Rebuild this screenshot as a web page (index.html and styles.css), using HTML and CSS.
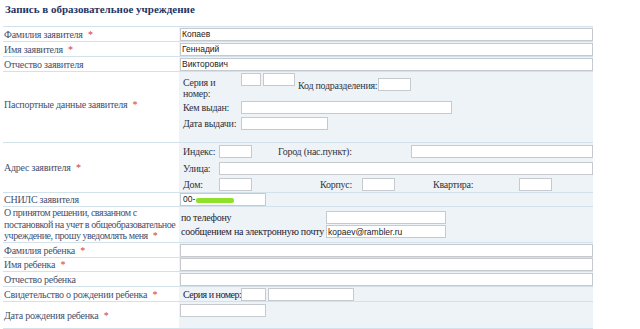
FILE: index.html
```html
<!DOCTYPE html>
<html lang="ru">
<head>
<meta charset="utf-8">
<title>Запись в образовательное учреждение</title>
<link rel="stylesheet" href="styles.css">
</head>
<body>
<div class="page">
  <h1 class="title">Запись в образовательное учреждение</h1>
  <table class="form">
    <tr class="h15">
      <td class="lab">Фамилия заявителя <span class="req">*</span></td>
      <td class="val"><input class="in full" value="Копаев"></td>
    </tr>
    <tr class="h15">
      <td class="lab">Имя заявителя <span class="req">*</span></td>
      <td class="val"><input class="in full" value="Геннадий"></td>
    </tr>
    <tr class="h15">
      <td class="lab">Отчество заявителя</td>
      <td class="val"><input class="in full" value="Викторович"></td>
    </tr>
    <tr class="h71">
      <td class="lab raise">Паспортные данные заявителя <span class="req">*</span></td>
      <td class="val top">
        <div class="pass">
          <div class="prow p1">
            <span class="plabel two">Серия и<br>номер:</span>
            <input class="in w20">
            <input class="in w32 gap2">
            <span class="kod">Код подразделения:</span>
            <input class="in w33 kin">
          </div>
          <div class="prow p2">
            <span class="plabel">Кем выдан:</span>
            <input class="in w211">
          </div>
          <div class="prow p3">
            <span class="plabel">Дата выдачи:</span>
            <input class="in w87">
          </div>
        </div>
      </td>
    </tr>
    <tr class="h50">
      <td class="lab">Адрес заявителя <span class="req">*</span></td>
      <td class="val top">
        <div class="addr">
          <div class="arow a1">
            <span class="alabel">Индекс:</span>
            <input class="in w33">
            <span class="city">Город (нас.пункт):</span>
            <input class="in wcity">
          </div>
          <div class="arow a2">
            <span class="alabel">Улица:</span>
            <input class="in wstreet">
          </div>
          <div class="arow a3">
            <span class="alabel">Дом:</span>
            <input class="in w33">
            <span class="korp">Корпус:</span>
            <input class="in w33">
            <span class="kv">Квартира:</span>
            <input class="in w33">
          </div>
        </div>
      </td>
    </tr>
    <tr class="h14">
      <td class="lab">СНИЛС заявителя</td>
      <td class="val"><div class="in w86 fake">00-<span class="mask"></span></div></td>
    </tr>
    <tr class="h36">
      <td class="lab multi">О принятом решении, связанном с<br>постановкой на учет в общеобразовательное<br>учреждение, прошу уведомлять меня <span class="req">*</span></td>
      <td class="val">
        <div class="notif">
          <div class="nrow n1"><span class="nlabel">по телефону</span><input class="in w120"></div>
          <div class="nrow n2"><span class="nlabel">сообщением на электронную почту</span><input class="in w120" value="kopaev@rambler.ru"></div>
        </div>
      </td>
    </tr>
    <tr class="h15">
      <td class="lab">Фамилия ребенка <span class="req">*</span></td>
      <td class="val"><input class="in full"></td>
    </tr>
    <tr class="h14">
      <td class="lab">Имя ребенка <span class="req">*</span></td>
      <td class="val"><input class="in full"></td>
    </tr>
    <tr class="h15">
      <td class="lab">Отчество ребенка</td>
      <td class="val"><input class="in full"></td>
    </tr>
    <tr class="h15">
      <td class="lab">Свидетельство о рождении ребенка <span class="req">*</span></td>
      <td class="val">
        <div class="cert">
          <span class="clabel">Серия и номер:</span>
          <input class="in w25">
          <input class="in w86 gap2">
        </div>
      </td>
    </tr>
    <tr class="h27">
      <td class="lab">Дата рождения ребенка <span class="req">*</span></td>
      <td class="val top"><input class="in w86 dob"></td>
    </tr>
  </table>
</div>
</body>
</html>
```

FILE: styles.css
```css
html, body {
  margin: 0;
  padding: 0;
  background: #ffffff;
  font-family: "Liberation Serif", "Times New Roman", serif;
}

.page {
  padding: 3px 0 0 3px;
}

.title {
  margin: 0 0 0 2px;
  height: 23px;
  font-size: 11px;
  line-height: 12px;
  letter-spacing: 0;
  font-weight: bold;
  color: #1f3563;
}

.form {
  border-collapse: collapse;
  width: 590px;
  table-layout: fixed;
}

.form td {
  padding: 0;
  border-bottom: 1px solid #d2e1ea;
  vertical-align: middle;
  overflow: hidden;
}

.form tr:first-child td {
  border-top: 1px solid #d2e1ea;
}

.lab {
  width: 175px;
  padding-left: 1px !important;
  background: #ffffff;
  color: #45506d;
  font-size: 10px;
  letter-spacing: -0.25px;
  line-height: 11px;
  white-space: nowrap;
}

.h71 td.lab.raise {
  height: 64px;
  padding-bottom: 6px;
}

.lab.multi {
  line-height: 11.5px;
  letter-spacing: -0.45px;
}

.req {
  color: #d23c3c;
  margin-left: 3px;
}

.val {
  background: #eef3f7;
  padding-left: 1px !important;
  font-size: 10px;
  letter-spacing: -0.25px;
  color: #2b2f38;
  line-height: 11px;
  white-space: nowrap;
}

.val.top {
  vertical-align: top !important;
}

.h14 td { height: 13px; }
.h15 td { height: 14px; }
.h71 td { height: 70px; }
.h50 td { height: 49px; }
.h36 td { height: 35px; }
.h27 td { height: 26px; }

.in {
  box-sizing: border-box;
  display: block;
  height: 13px;
  margin: 0;
  padding: 0 1px;
  border: 1px solid #c6cacf;
  background: #ffffff;
  font-family: "Liberation Sans", Arial, sans-serif;
  font-size: 8.5px;
  letter-spacing: 0;
  line-height: 11px;
  color: #222222;
  outline: none;
}

.full { width: 413px; }
.w20 { width: 20px; }
.w25 { width: 25px; }
.w32 { width: 32px; }
.w33 { width: 33px; }
.w86 { width: 86px; }
.w87 { width: 87px; }
.w120 { width: 120px; }
.w211 { width: 211px; }
.wcity { width: 183px; }
.wstreet { width: 374px; }
.gap2 { margin-left: 2px; }

/* passport block */
.pass {
  display: flex;
  flex-direction: column;
  padding-left: 3px;
  padding-top: 1px;
}

.prow {
  display: flex;
  align-items: center;
}

.p1 {
  align-items: flex-start;
  height: 27px;
}

.plabel {
  width: 58px;
  flex: none;
  color: #2e3340;
}

.plabel.two {
  padding-top: 4px;
}

.kod {
  margin-left: 3px;
  margin-top: 7px;
  color: #2e3340;
}

.kin {
  margin-left: 1px;
  margin-top: 5px;
}

.p2 {
  height: 13px;
  margin-top: 1px;
}

.p3 {
  height: 13px;
  margin-top: 3px;
}

/* address block */
.addr {
  display: flex;
  flex-direction: column;
  padding-left: 3px;
  padding-top: 2px;
}

.arow {
  display: flex;
  align-items: center;
  height: 13px;
}

.a2 { margin-top: 4px; }
.a3 { margin-top: 3px; }

.alabel {
  width: 36px;
  flex: none;
  color: #2e3340;
}

.city {
  width: 133px;
  margin-left: 26px;
  color: #2e3340;
}

.korp {
  width: 42px;
  margin-left: 68px;
  color: #2e3340;
}

.kv {
  width: 86px;
  margin-left: 38px;
  color: #2e3340;
}

/* snils */
.fake {
  display: flex;
  align-items: center;
  padding-left: 2px;
}

.mask {
  display: inline-block;
  width: 38px;
  height: 5px;
  margin-left: 1px;
  margin-top: 2px;
  background: #8ee02a;
  border-radius: 2px;
}

/* notification */
.notif {
  display: flex;
  flex-direction: column;
  gap: 1px;
  padding-left: 1px;
}

.nrow {
  display: flex;
  align-items: center;
  height: 13px;
}

.nlabel {
  width: 145px;
  flex: none;
  color: #1e2230;
}

/* certificate */
.cert {
  display: flex;
  align-items: center;
  padding-left: 3px;
}

.clabel {
  flex: none;
  width: 58px;
  letter-spacing: -0.5px;
  color: #1e2230;
}

.dob {
  margin-top: 2px;
}
```
